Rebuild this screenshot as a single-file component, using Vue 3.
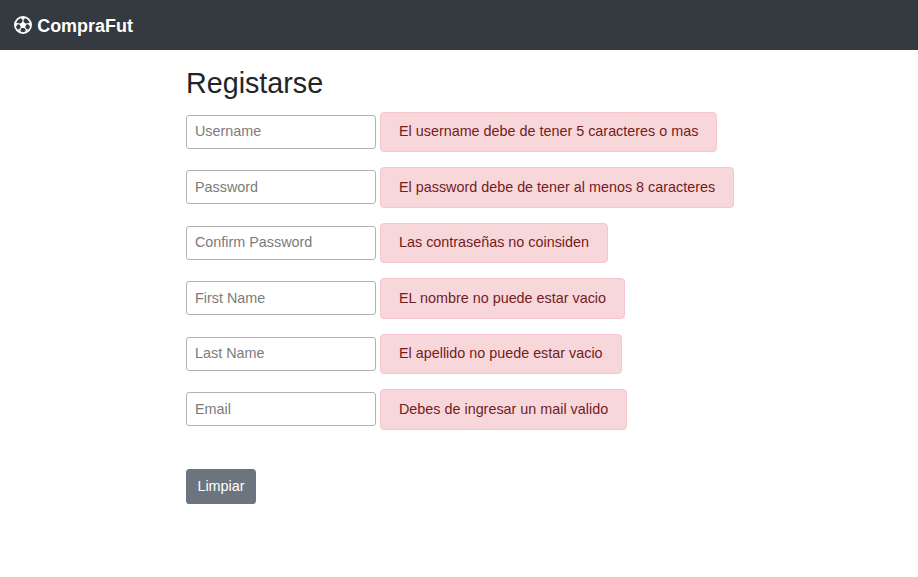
<script setup>
const fields = [
  { label: 'Username', type: 'text', error: 'El username debe de tener 5 caracteres o mas' },
  { label: 'Password', type: 'password', error: 'El password debe de tener al menos 8 caracteres' },
  { label: 'Confirm Password', type: 'password', error: 'Las contraseñas no coinsiden' },
  { label: 'First Name', type: 'text', error: 'EL nombre no puede estar vacio' },
  { label: 'Last Name', type: 'text', error: 'El apellido no puede estar vacio' },
  { label: 'Email', type: 'text', error: 'Debes de ingresar un mail valido' },
]
</script>

<template>
  <nav class="navbar">
    <svg class="ball" viewBox="0 0 18 18" aria-hidden="true">
      <circle cx="9" cy="9" r="8.1" fill="none" stroke="#fff" stroke-width="1.8" />
      <path d="M9 5.6 12.3 8 11 11.9H7L5.7 8Z" fill="#fff" />
      <path d="M9 6.5V3.5M12 8.3l2.6-.9M10.8 11.7l1.7 2.2M7.2 11.7l-1.7 2.2M6 8.3l-2.6-.9" stroke="#fff" stroke-width="1.2" />
      <path d="M6 1.5 9 3.9l3-2.4ZM16.5 6.2l-2.6 1.5 2.6 3.6ZM11.8 13.4l3.3-.2-4 3.4ZM6.2 13.4l-3.3-.2 4 3.4ZM1.5 6.2l2.6 1.5-2.6 3.6Z" fill="#fff" />
    </svg>
    <span class="brand">CompraFut</span>
  </nav>
  <main class="container">
    <h1>Registarse</h1>
    <form @submit.prevent>
      <div v-for="field in fields" :key="field.label" class="row">
        <input :type="field.type" :placeholder="field.label" :aria-label="field.label" />
        <div class="alert">{{ field.error }}</div>
      </div>
      <button type="reset">Limpiar</button>
    </form>
  </main>
</template>

<style>
body { background: #fff; }
</style>

<style scoped>
.navbar, .container, .container * { box-sizing: border-box; font-family: "Liberation Sans", Arial, sans-serif; }
.navbar { display: flex; align-items: center; height: 50px; padding: 0 14px; background: #343a40; color: #fff; }
.ball { width: 18px; height: 18px; margin-right: 5.2px; }
.brand { font-size: 17.95px; font-weight: 700; line-height: 26px; padding-top: 2px; }
.container { padding: 16px 0 0 186px; font-size: 14.36px; line-height: 21.6px; color: #212529; }
h1 { margin: 0 0 11.5px; font-size: 28.7px; font-weight: 400; line-height: 34.5px; }
.row { display: flex; align-items: flex-start; gap: 4px; height: 40.4px; margin-bottom: 15.05px; }
input { width: 190px; height: 34px; margin: 3px 0 0; padding: 0 8px 1.2px; border: 1px solid #b2b2b2; border-radius: 3px; font-size: 14.36px; outline: none; background: #fff; }
input::placeholder { color: #7b7b7b; opacity: 1; }
.alert { height: 40.4px; padding: 8.4px 18px; border: 1px solid #f5c6cb; border-radius: 4px; background: #f8d7da; color: #721c24; white-space: nowrap; }
button { display: block; width: 70px; height: 35px; margin-top: 39.3px; padding: 0; border: 0; border-radius: 3.6px; background: #6c757d; color: #fff; font-size: 14.4px; }
</style>
